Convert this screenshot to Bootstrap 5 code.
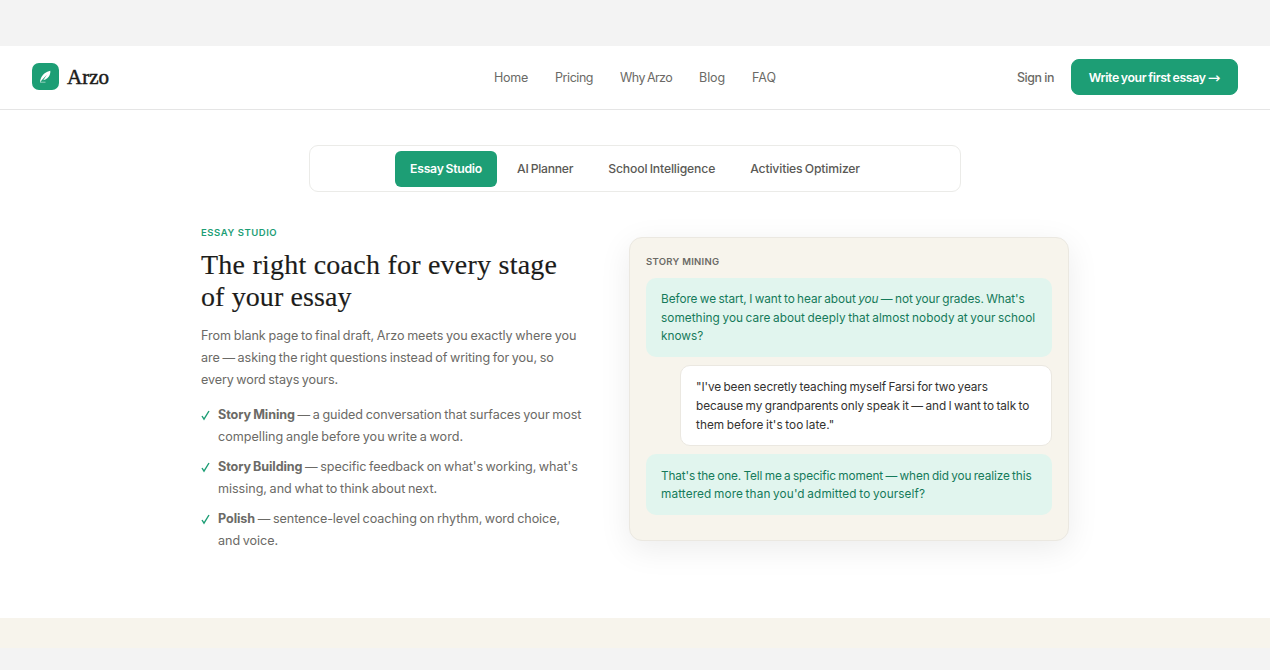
<!DOCTYPE html>
<html lang="en">
<head>
<meta charset="utf-8">
<meta name="viewport" content="width=device-width, initial-scale=1">
<title>Arzo – Essay Studio</title>
<link href="https://cdn.jsdelivr.net/npm/bootstrap@5.3.0/dist/css/bootstrap.min.css" rel="stylesheet">
<style>
:root{--green:#1d9e75;--ink:#1c1c1a;--muted:#6b6a66;--cream:#f7f4ec;--line:#ebebe8}
body{font-family:Inter,"Open Sans",sans-serif;font-size:12.6px;color:var(--muted);background:#f3f3f3;height:670px;overflow:hidden;word-spacing:-.8px}
.page-frame{margin-top:46px;height:602px;background:#fff}
.site-nav{height:64px;padding:0 32px 1px;border-bottom:1px solid #e5e5e5}
.side{flex:1 1 0}
.logo-box{width:27px;height:27px;margin-top:-1px;border-radius:7px;background:var(--green)}
.serif{font-family:"Liberation Serif",serif;color:var(--ink);word-spacing:0;-webkit-text-stroke:.15px var(--ink)}
.brand-name{font-size:21px;line-height:27px;-webkit-text-stroke-width:.5px}
.menu-links{gap:27px;padding-top:2px;font-size:12.5px}
.menu-links a,.signin{color:var(--muted);text-decoration:none;white-space:nowrap}
.signin{font-size:12.4px;font-weight:500;padding-top:2px;margin-right:1px;word-spacing:0}
.btn-green{--bs-btn-color:#fff;--bs-btn-bg:var(--green);--bs-btn-border-color:var(--green);--bs-btn-hover-color:#fff;--bs-btn-hover-bg:#178a65;width:167px;height:36px;border-radius:8px;padding:2px 0 0;font-size:12.3px;font-weight:600;white-space:nowrap}
.arrow{font:15px/12px "DejaVu Sans",sans-serif;margin-left:2px}
.tab-box{width:652px;height:47px;margin:35px auto 0;border:1px solid var(--line);border-radius:9px;gap:5px}
.tab-box .nav-link{height:36px;padding:0 15px;border-radius:6px;color:#5a5955;font-size:12.2px;font-weight:500;line-height:36px;white-space:nowrap}
.tab-box .nav-link.active{background:var(--green);color:#fff;font-weight:600}
.feature{width:868px;margin:34px auto 0;gap:47px}
.copy-col{width:381px}
.ln{display:block;width:max-content;white-space:nowrap}
.eyebrow{font-size:9.5px;font-weight:600;line-height:13px;color:var(--green);letter-spacing:.55px;word-spacing:0}
.headline{font-size:28px;font-weight:400;line-height:32px;margin:9.500px 0 12.500px}
.body-text{line-height:21.8px}
.check-list{margin:13.500px 0 0;line-height:21.8px}
.check-list li{display:flex;margin-bottom:8.6px}
.check-list svg{width:9px;height:11px;margin:6px 8px 0 0;flex:none}
.chat-card{width:440px;height:304px;margin-top:11px;padding:17px 16px;background:var(--cream);border:1px solid #ebe8e1;border-radius:13px;box-shadow:0 8px 32px rgba(0,0,0,.08);font-size:11.8px;line-height:18.7px}
.chat-title{font-size:9.5px;font-weight:600;line-height:14px;margin-bottom:8.500px;letter-spacing:.27px;word-spacing:0}
.chat-list{gap:8.3px}
.bubble{background:#e1f5ee;color:#157a5a;border-radius:10px;padding:12.300px 15px 10.700px}
.reply{margin-left:34px;background:#fff;color:#333230;border:1px solid #ebe8e1}
.cream-band{height:30px;background:var(--cream)}
/* tracking steps */
.k-60{letter-spacing:-.6px}.k-45{letter-spacing:-.45px}.k-35{letter-spacing:-.35px}.k-25{letter-spacing:-.25px}.k-15{letter-spacing:-.15px}
.k-12{letter-spacing:-.12px}.k-9{letter-spacing:-.09px}.k-7{letter-spacing:-.07px}.k-4{letter-spacing:-.04px}.k5{letter-spacing:.05px}.k11{letter-spacing:.11px}.k23{letter-spacing:.23px}
</style>
</head>
<body>
<div class="page-frame d-flex flex-column">
<header class="site-nav d-flex align-items-center">
<a class="side d-flex align-items-center gap-2 text-decoration-none" href="#">
<span class="logo-box d-flex"><svg width="27" height="27" viewBox="0 0 27 27"><path d="M18.300 7.700c-4 .8-7.700 3.700-9.300 7.300-.7 1.500-1 2.900-1 4.200.8-1.100 1.700-2.100 2.600-3l4.300-4.500-3.700 5.600c3.200-.7 5.500-3 6.500-5.400.6-1.500.8-2.900.6-4.200z" fill="#fff"/><path d="M8 19.200h5.500" stroke="#fff" stroke-width=".8" opacity=".65"/></svg></span>
<span class="serif brand-name">Arzo</span></a>
<nav class="menu-links d-flex"><a href="#" class="k-25">Home</a><a href="#" class="k-45">Pricing</a><a href="#" class="k-60">Why Arzo</a><a href="#" class="k-12">Blog</a><a href="#">FAQ</a></nav>
<div class="side d-flex align-items-center justify-content-end gap-3"><a href="#" class="signin k-45">Sign in</a>
<a class="btn btn-green d-flex align-items-center justify-content-center" href="#"><span class="k-35">Write your first essay</span><span class="arrow">→</span></a></div>
</header>
<main class="flex-grow-1">
<ul class="tab-box nav align-items-center justify-content-center">
<li><a href="#" class="nav-link active k-25">Essay Studio</a></li><li><a href="#" class="nav-link k-25">AI Planner</a></li><li><a href="#" class="nav-link k-15">School Intelligence</a></li><li><a href="#" class="nav-link k-15">Activities Optimizer</a></li></ul>
<section class="feature d-flex align-items-start">
<div class="copy-col">
<div class="eyebrow">ESSAY STUDIO</div>
<h2 class="headline serif"><span class="ln k23">The right coach for every stage</span><span class="ln k11">of your essay</span></h2>
<p class="body-text mb-0"><span class="ln k-4">From blank page to final draft, Arzo meets you exactly where you</span><span class="ln k-7">are — asking the right questions instead of writing for you, so</span><span class="ln k-12">every word stays yours.</span></p>
<ul class="check-list list-unstyled">
<li><svg viewBox="0 0 9 11"><path d="M1 6l2 3.200L8 1" fill="none" stroke="#1d9e75" stroke-width="1.400"/></svg><div><span class="ln k-7"><b>Story Mining</b> — a guided conversation that surfaces your most</span><span class="ln">compelling angle before you write a word.</span></div></li>
<li><svg viewBox="0 0 9 11"><path d="M1 6l2 3.200L8 1" fill="none" stroke="#1d9e75" stroke-width="1.400"/></svg><div><span class="ln k-9"><b>Story Building</b> — specific feedback on what's working, what's</span><span class="ln k-4">missing, and what to think about next.</span></div></li>
<li><svg viewBox="0 0 9 11"><path d="M1 6l2 3.200L8 1" fill="none" stroke="#1d9e75" stroke-width="1.400"/></svg><div><span class="ln k-7"><b>Polish</b> — sentence-level coaching on rhythm, word choice,</span><span class="ln k-4">and voice.</span></div></li>
</ul></div>
<div class="chat-card">
<div class="chat-title">STORY MINING</div>
<div class="chat-list d-flex flex-column">
<div class="bubble"><span class="ln k-7">Before we start, I want to hear about <em>you</em> — not your grades. What's</span><span class="ln k5">something you care about deeply that almost nobody at your school</span><span class="ln">knows?</span></div>
<div class="bubble reply"><span class="ln k-9">"I've been secretly teaching myself Farsi for two years</span><span class="ln k-7">because my grandparents only speak it — and I want to talk to</span><span class="ln k5">them before it's too late."</span></div>
<div class="bubble"><span class="ln k-12">That's the one. Tell me a specific moment — when did you realize this</span><span class="ln k11">mattered more than you'd admitted to yourself?</span></div>
</div></div>
</section></main>
<div class="cream-band"></div></div>
</body>
</html>
